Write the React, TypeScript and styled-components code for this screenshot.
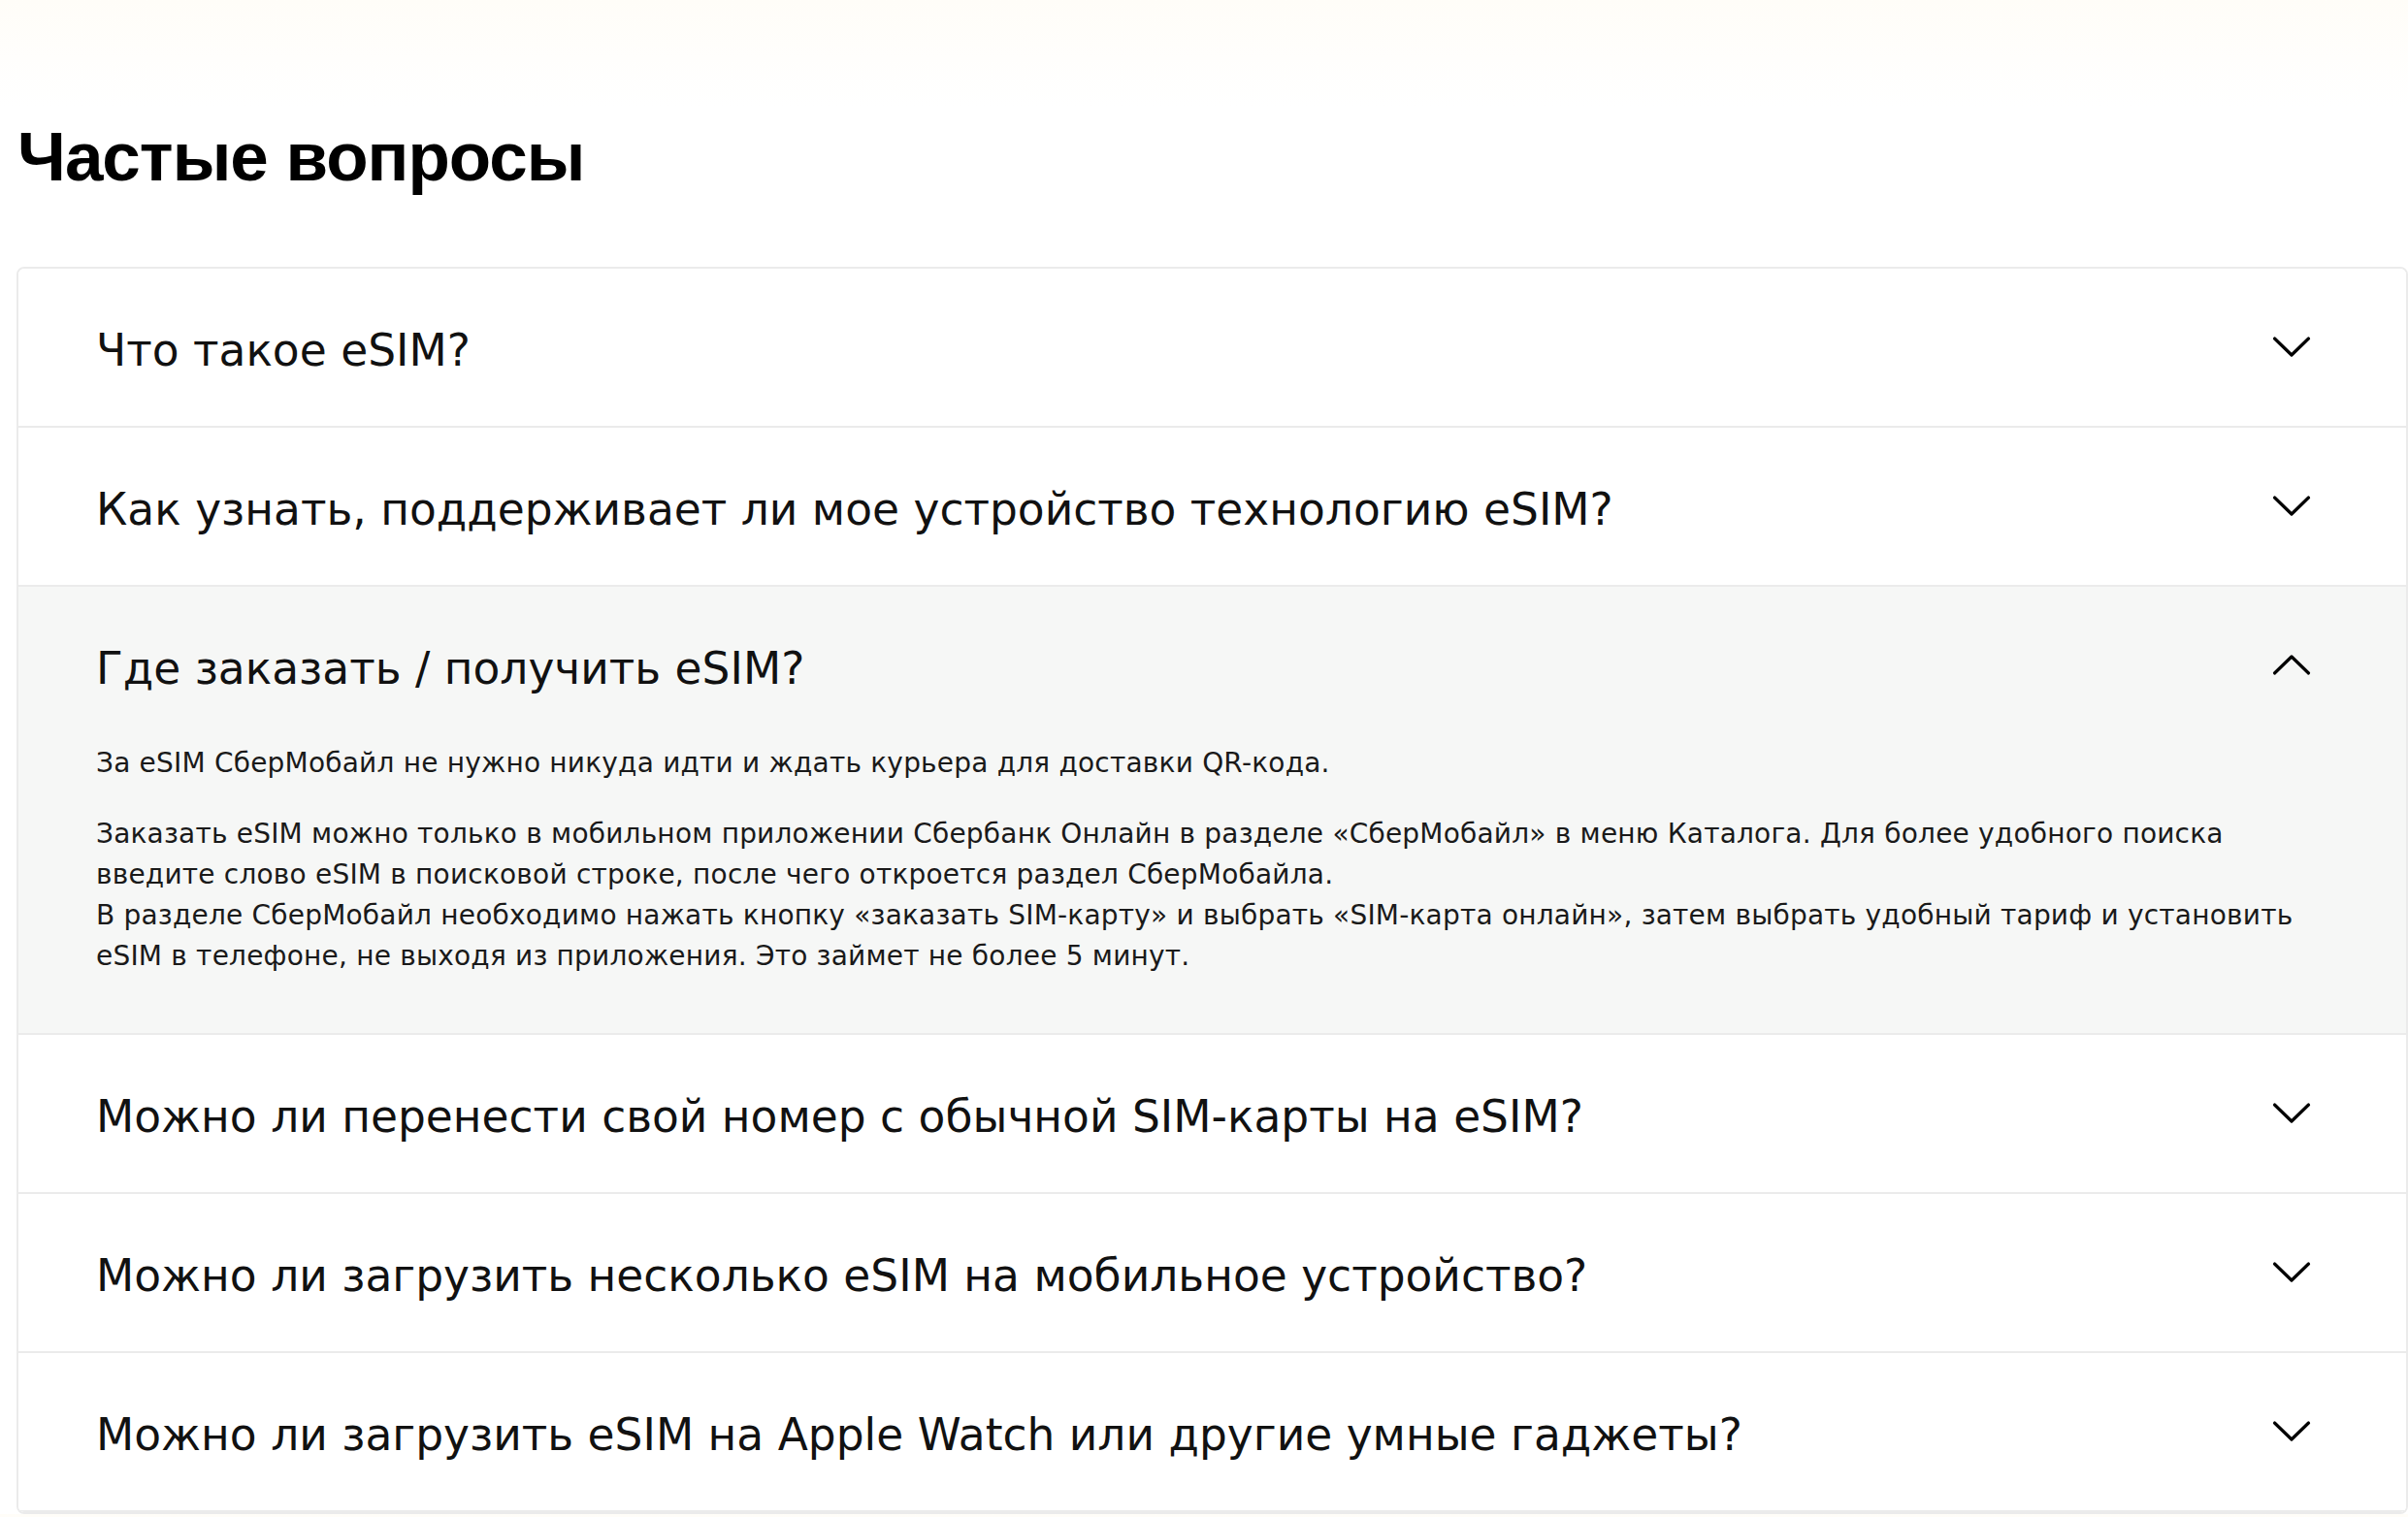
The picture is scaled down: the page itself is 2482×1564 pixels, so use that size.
import React, { useState } from "react";
import styled, { createGlobalStyle } from "styled-components";

const GlobalStyle = createGlobalStyle`
  html, body {
    margin: 0;
    padding: 0;
    background: linear-gradient(180deg, #fffdf8 0px, #fffefc 60px, #ffffff 110px);
    font-family: "DejaVu Sans", "Noto Sans", sans-serif;
    color: #000;
  }
`;

const questions = [
  "Что такое eSIM?",
  "Как узнать, поддерживает ли мое устройство технологию eSIM?",
  "Где заказать / получить eSIM?",
  "Можно ли перенести свой номер с обычной SIM-карты на eSIM?",
  "Можно ли загрузить несколько eSIM на мобильное устройство?",
  "Можно ли загрузить eSIM на Apple Watch или другие умные гаджеты?",
];

function Chevron({ up }: { up: boolean }) {
  return (
    <IconBox>
      <svg width="40" height="40" viewBox="0 0 40 40" fill="none">
        <path
          d={up ? "M2.5 28 L20 11 L37.5 28" : "M2.5 11 L20 28 L37.5 11"}
          stroke="#000"
          strokeWidth="3.2"
          strokeLinecap="round"
          strokeLinejoin="round"
        />
      </svg>
    </IconBox>
  );
}

function App() {
  const [open, setOpen] = useState<number | null>(2);

  return (
    <Page>
      <GlobalStyle />
      <Title>Частые вопросы</Title>
      <Card>
        {questions.map((q, i) => (
          <Item key={i} $open={open === i}>
            <Head onClick={() => setOpen(open === i ? null : i)}>
              <Question>{q}</Question>
              <Chevron up={open === i} />
            </Head>
            {open === i && (
              <Answer>
                <p>
                  За eSIM СберМобайл не нужно никуда идти и ждать курьера для доставки QR-кода.
                </p>
                <p>
                  Заказать eSIM можно только в мобильном приложении Сбербанк Онлайн в разделе
                  «СберМобайл» в меню Каталога. Для более удобного поиска введите слово eSIM в
                  поисковой строке, после чего откроется раздел СберМобайла.
                  <br />
                  В разделе СберМобайл необходимо нажать кнопку «заказать SIM-карту» и выбрать
                  «SIM-карта онлайн», затем выбрать удобный тариф и установить eSIM в телефоне, не
                  выходя из приложения. Это займет не более 5 минут.
                </p>
              </Answer>
            )}
          </Item>
        ))}
      </Card>
    </Page>
  );
}

const Page = styled.div`
  padding: 0 0 0 17px;
  box-sizing: border-box;
  width: 2482px;
`;

const Title = styled.h1`
  margin: 126px 0 77px 0;
  padding-left: 1px;
  font-family: "Liberation Sans", Arial, sans-serif;
  font-weight: 700;
  font-size: 71px;
  line-height: 72px;
  letter-spacing: -1px;
  color: #000;
`;

const Card = styled.div`
  border: 2px solid #ebebeb;
  border-radius: 8px;
  overflow: hidden;
  background: #fff;
`;

const Item = styled.div<{ $open: boolean }>`
  border-bottom: 2px solid #ebebeb;
  background: ${(p) => (p.$open ? "#f6f7f6" : "#fff")};
`;

const Head = styled.div`
  height: 162px;
  display: flex;
  align-items: center;
  justify-content: space-between;
  padding: 0 98px 0 80px;
  cursor: pointer;
`;

const Question = styled.div`
  padding-top: 8px;
  font-size: 45.5px;
  line-height: 56px;
  color: #111;
`;

const IconBox = styled.div`
  width: 40px;
  height: 40px;
  display: flex;
  align-items: center;
  justify-content: center;
`;

const Answer = styled.div`
  padding: 0 96px 58px 80px;
  display: flex;
  flex-direction: column;
  gap: 31px;
  margin-top: -1px;

  p {
    margin: 0;
    font-size: 28px;
    line-height: 42px;
    letter-spacing: 0.2px;
    color: #1a1a1a;
  }
`;

export default App;
